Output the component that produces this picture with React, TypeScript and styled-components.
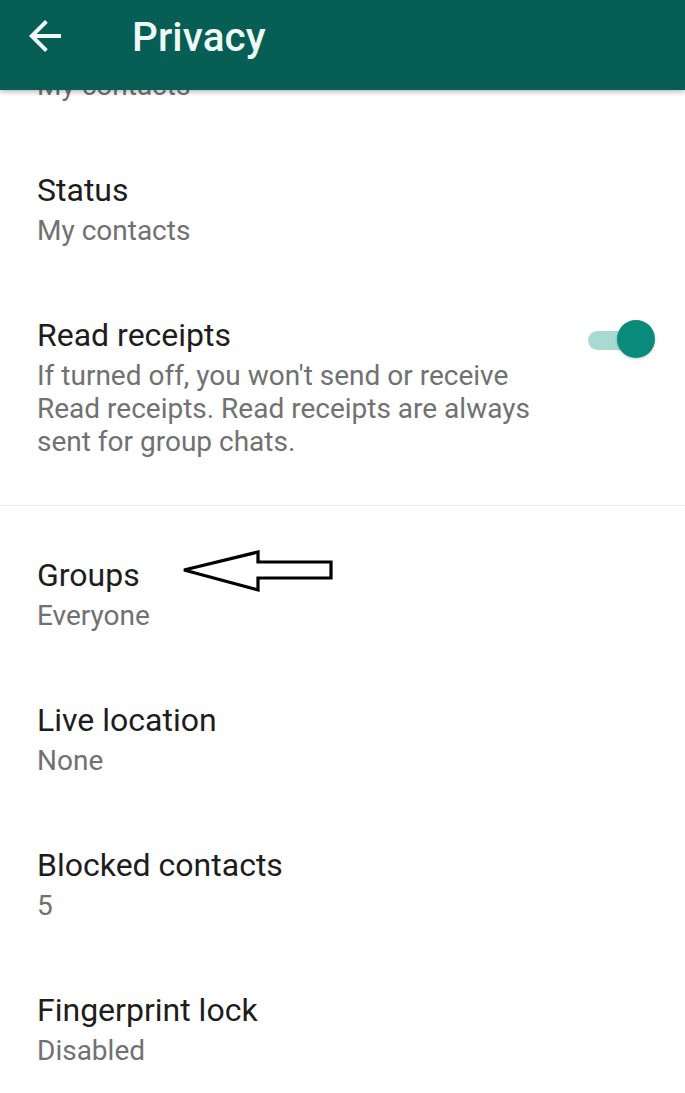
import React from "react";
import styled, { createGlobalStyle } from "styled-components";

const GlobalStyle = createGlobalStyle`
  html, body {
    margin: 0;
    padding: 0;
    background: #ffffff;
    font-family: Roboto, "Noto Sans", "Liberation Sans", sans-serif;
    overflow: hidden;
  }
  * { box-sizing: border-box; }
`;

const Page = styled.div`
  position: relative;
  width: 685px;
  height: 1093px;
  overflow: hidden;
  background: #ffffff;
`;

const Header = styled.header`
  position: relative;
  z-index: 2;
  height: 90px;
  background: #075e54;
  box-shadow: 0 2px 5px rgba(0, 0, 0, 0.28);
`;

const Toolbar = styled.div`
  height: 74px;
  display: flex;
  align-items: center;
  padding-left: 21px;
`;

const BackButton = styled.div`
  width: 48px;
  height: 48px;
  margin-top: -3px;
  display: flex;
  align-items: center;
  justify-content: center;
  color: #eef8f6;
`;

const HeaderTitle = styled.h1`
  margin: 0 0 0 63px;
  font-size: 40.5px;
  font-weight: 500;
  color: #eef8f6;
  letter-spacing: 0.1px;
`;

const List = styled.div`
  position: relative;
  z-index: 1;
  margin-top: -100px;
`;

const Section = styled.section<{ $padTop?: number }>`
  padding-top: ${(p) => p.$padTop ?? 0}px;
`;

const Row = styled.div<{ $padBottom?: number }>`
  display: flex;
  align-items: flex-start;
  padding: 33px 30px ${(p) => p.$padBottom ?? 33}px 37px;
`;

const TextCol = styled.div`
  flex: 1;
  min-width: 0;
`;

const Title = styled.div`
  font-size: 32px;
  line-height: 44px;
  color: #1d1d1d;
  white-space: nowrap;
`;

const TitleSpacer = styled.div`
  height: 44px;
`;

const Subtitle = styled.div`
  margin-top: 2px;
  font-size: 28px;
  line-height: 33px;
  color: #717171;
  white-space: nowrap;
`;

const Divider = styled.div`
  height: 1px;
  background: #ececec;
`;

const Toggle = styled.div`
  position: relative;
  flex: none;
  width: 67px;
  height: 40px;
  margin-top: 6px;
`;

const Track = styled.div`
  position: absolute;
  left: 0;
  top: 12px;
  width: 60px;
  height: 19px;
  border-radius: 10px;
  background: #a9d9d3;
`;

const Thumb = styled.div`
  position: absolute;
  right: 0;
  top: 1px;
  width: 38px;
  height: 38px;
  border-radius: 50%;
  background: #0a8a7b;
  box-shadow: 0 1px 3px rgba(0, 0, 0, 0.22);
`;

const Annotation = styled.svg`
  position: absolute;
  left: 178px;
  top: 546px;
  z-index: 3;
`;

type Item = { title: string; sub: string };

const groupItems: Item[] = [
  { title: "Groups", sub: "Everyone" },
  { title: "Live location", sub: "None" },
  { title: "Blocked contacts", sub: "5" },
  { title: "Fingerprint lock", sub: "Disabled" },
];

export default function App() {
  return (
    <Page>
      <GlobalStyle />
      <Header>
        <Toolbar>
          <BackButton>
            <svg width="48" height="48" viewBox="0 0 24 24" fill="currentColor">
              <path d="M20 11H7.83l5.59-5.59L12 4l-8 8 8 8 1.41-1.41L7.83 13H20v-2z" />
            </svg>
          </BackButton>
          <HeaderTitle>Privacy</HeaderTitle>
        </Toolbar>
      </Header>
      <List>
        <Section>
          <Row>
            <TextCol>
              <TitleSpacer />
              <Subtitle>My contacts</Subtitle>
            </TextCol>
          </Row>
          <Row>
            <TextCol>
              <Title>Status</Title>
              <Subtitle>My contacts</Subtitle>
            </TextCol>
          </Row>
          <Row $padBottom={47}>
            <TextCol>
              <Title>Read receipts</Title>
              <Subtitle>
                If turned off, you won't send or receive
                <br />
                Read receipts. Read receipts are always
                <br />
                sent for group chats.
              </Subtitle>
            </TextCol>
            <Toggle>
              <Track />
              <Thumb />
            </Toggle>
          </Row>
        </Section>
        <Divider />
        <Section $padTop={14}>
          {groupItems.map((it) => (
            <Row key={it.title}>
              <TextCol>
                <Title>{it.title}</Title>
                <Subtitle>{it.sub}</Subtitle>
              </TextCol>
            </Row>
          ))}
        </Section>
      </List>
      <Annotation width="160" height="50" viewBox="0 0 160 50">
        <polygon
          points="6,24 80,6 80,16 153,16 153,32 80,32 80,44"
          fill="#ffffff"
          stroke="#000000"
          strokeWidth="3.2"
          strokeLinejoin="miter"
        />
      </Annotation>
    </Page>
  );
}
